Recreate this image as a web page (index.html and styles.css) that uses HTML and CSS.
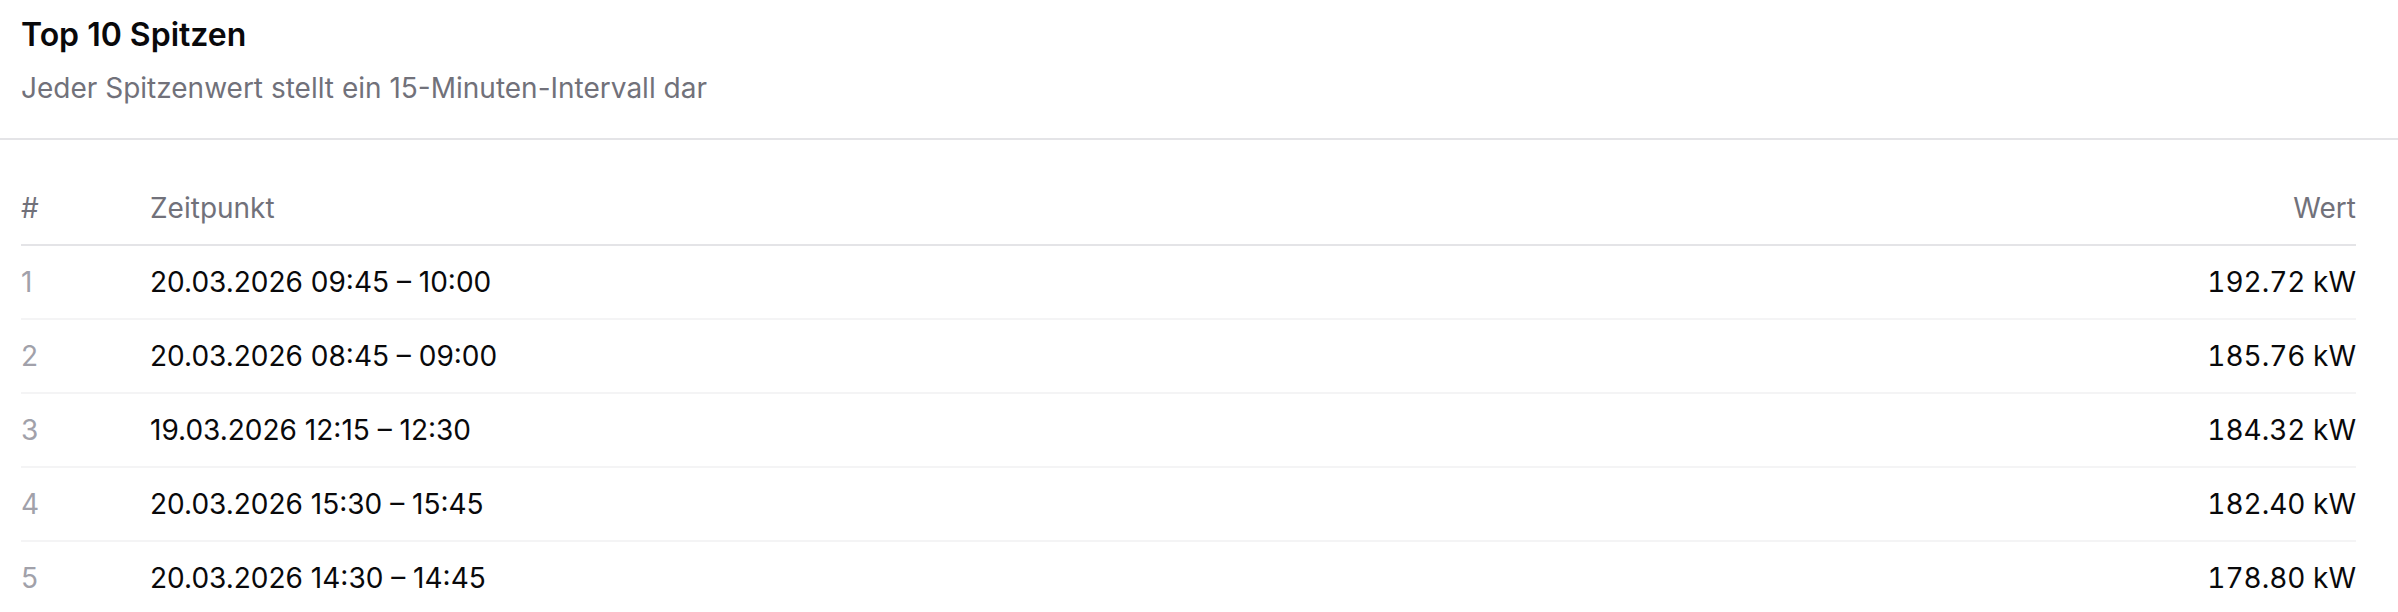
FILE: index.html
```html
<!DOCTYPE html>
<html lang="de">
<head>
<meta charset="utf-8">
<title>Top 10 Spitzen</title>
<link rel="stylesheet" href="styles.css">
</head>
<body>
<section class="card">
  <header class="card-header">
    <h3 class="card-title">Top 10 Spitzen</h3>
    <p class="card-desc">Jeder Spitzenwert stellt ein 15-Minuten-Intervall dar</p>
  </header>
  <div class="card-body">
    <table class="peaks">
      <thead>
        <tr>
          <th class="col-rank">#</th>
          <th class="col-time">Zeitpunkt</th>
          <th class="col-value">Wert</th>
        </tr>
      </thead>
      <tbody>
        <tr><td class="col-rank">1</td><td class="col-time">20.03.2026 09:45 – 10:00</td><td class="col-value">192.72 kW</td></tr>
        <tr><td class="col-rank">2</td><td class="col-time">20.03.2026 08:45 – 09:00</td><td class="col-value">185.76 kW</td></tr>
        <tr><td class="col-rank">3</td><td class="col-time">19.03.2026 12:15 – 12:30</td><td class="col-value">184.32 kW</td></tr>
        <tr><td class="col-rank">4</td><td class="col-time">20.03.2026 15:30 – 15:45</td><td class="col-value">182.40 kW</td></tr>
        <tr><td class="col-rank">5</td><td class="col-time">20.03.2026 14:30 – 14:45</td><td class="col-value">178.80 kW</td></tr>
      </tbody>
    </table>
  </div>
</section>
</body>
</html>
```
FILE: styles.css
```css
html, body {
  margin: 0;
  padding: 0;
  background: #ffffff;
}
body {
  font-family: Inter, "Noto Sans", "Liberation Sans", sans-serif;
  color: #09090b;
}
.card {
  display: flex;
  flex-direction: column;
}
.card-header {
  padding: 19px 21px 30px;
  border-bottom: 2px solid #e4e4e7;
  display: flex;
  flex-direction: column;
  gap: 17px;
}
.card-title {
  margin: 0;
  font-size: 32px;
  line-height: 32px;
  font-weight: 600;
}
.card-desc {
  margin: 0;
  font-size: 28px;
  line-height: 40px;
  color: #71717a;
}
.card-body {
  padding: 32px 42px 0 21px;
}
.peaks {
  width: 100%;
  border-collapse: collapse;
  font-size: 28px;
  line-height: 40px;
}
.peaks th {
  font-weight: 400;
  color: #71717a;
  text-align: left;
  padding: 16px 0;
  border-bottom: 2px solid #e4e4e7;
}
.peaks td {
  padding: 16px 0;
  border-bottom: 2px solid #f4f4f5;
}
.peaks .col-rank {
  width: 129px;
}
.peaks td.col-rank {
  color: #a1a1aa;
}
.peaks .col-value {
  text-align: right;
}
.peaks td.col-value {
  font-variant-numeric: tabular-nums;
}
```
